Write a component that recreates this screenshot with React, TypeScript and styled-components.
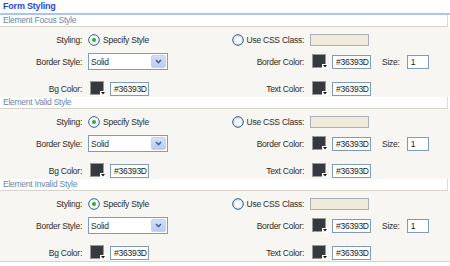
import React from 'react';
import styled, { createGlobalStyle } from 'styled-components';

const GlobalStyle = createGlobalStyle`
    html, body {
        margin: 0;
        padding: 0;
        background: #ffffff;
    }
    body {
        font-family: "Liberation Sans", Arial, sans-serif;
        font-size: 8.5px;
        letter-spacing: -0.25px;
        color: #2b2b2b;
    }
`;

const Page = styled.div`
    width: 450px;
    height: 266px;
    overflow: hidden;
    background: #ffffff;
    display: flex;
    flex-direction: column;
`;

const Title = styled.div`
    height: 13px;
    line-height: 13px;
    padding-left: 3px;
    font-size: 9px;
    font-weight: bold;
    letter-spacing: -0.2px;
    color: #2a47d6;
    border-bottom: 2px solid #a9c6ef;
`;

const SectionHeader = styled.div`
    height: 11px;
    line-height: 11px;
    padding-left: 3px;
    margin-right: 2px;
    color: #6a86ab;
    background: #ffffff;
    border-bottom: 1px solid #d8d4cc;
    border-right: 1px solid #dedad3;
`;

const SectionBody = styled.div`
    height: 70px;
    background: #f7f6f2;
`;

const Footer = styled.div`
    flex: 1;
    background: #ffffff;
    border-top: 1px solid #d8d4cc;
`;

const Row = styled.div<{ $height: number; $top?: number }>`
    display: grid;
    grid-template-columns: 82px 142px 68px 1fr;
    column-gap: 6px;
    align-items: center;
    box-sizing: border-box;
    height: ${p => p.$height}px;
    padding-top: ${p => p.$top || 0}px;
`;

const Label = styled.div`
    text-align: right;
    white-space: nowrap;
`;

const Control = styled.div`
    display: flex;
    align-items: center;
    white-space: nowrap;
`;

const RadioOption = styled.div<{ $end?: boolean }>`
    display: flex;
    align-items: center;
    justify-content: ${p => (p.$end ? 'flex-end' : 'flex-start')};
    gap: 3px;
    white-space: nowrap;

    svg {
        flex-shrink: 0;
    }
`;

const SelectBox = styled.div`
    width: 80px;
    height: 17px;
    box-sizing: border-box;
    border: 1px solid #7f9db9;
    background: #ffffff;
    display: flex;
    align-items: center;
    justify-content: space-between;
    padding-left: 2px;
`;

const SelectButton = styled.div`
    width: 15px;
    height: 13px;
    margin-right: 1px;
    border-radius: 2px;
    background: linear-gradient(#d3e0fd, #b7cbf6);
    border: 1px solid #c3d3f7;
    box-sizing: border-box;
    display: flex;
    align-items: center;
    justify-content: center;
`;

const TextBox = styled.div<{ $width: number; $bg?: string; $border?: string; $height?: number }>`
    flex-shrink: 0;
    width: ${p => p.$width}px;
    height: ${p => p.$height || 14}px;
    line-height: ${p => (p.$height || 14) - 2}px;
    box-sizing: border-box;
    padding-left: 3px;
    background: ${p => p.$bg || '#ffffff'};
    border: 1px solid ${p => p.$border || '#7f9db9'};
    color: #222;
`;

const SwatchWrap = styled.div`
    flex-shrink: 0;
    margin-left: 2px;
    margin-right: 4px;
    display: flex;
`;

const SizeLabel = styled.span`
    margin-left: 11px;
    margin-right: 7px;
`;

const Radio = ({ checked }: { checked?: boolean }) => (
    <svg width="12" height="12" viewBox="0 0 12 12">
        <circle cx="6" cy="6" r="5.3" fill={checked ? '#ffffff' : '#e4e7ec'} stroke="#2d5e8e" strokeWidth="1" />
        <circle cx="6.3" cy="6.3" r="3.4" fill={checked ? '#f2f2f0' : '#f7f8fa'} />
        {checked && <circle cx="6" cy="6" r="2" fill="#2fae2f" />}
    </svg>
);

const Chevron = () => (
    <svg width="7" height="5" viewBox="0 0 7 5">
        <path d="M1 1 L3.5 3.6 L6 1" fill="none" stroke="#4b5f87" strokeWidth="1.5" />
    </svg>
);

const Swatch = ({ color }: { color: string }) => (
    <SwatchWrap>
        <svg width="16" height="15" viewBox="0 0 16 15">
            <rect x="0.5" y="0.5" width="13" height="13" fill={color} stroke="#9a9a9a" />
            <rect x="10" y="10" width="6" height="5" fill="#ffffff" />
            <path d="M11 11 L15 11 L13 13.5 Z" fill="#111111" />
        </svg>
    </SwatchWrap>
);

const ColorField = ({ value }: { value: string }) => (
    <Control>
        <Swatch color={value} />
        <TextBox $width={39}>{value}</TextBox>
    </Control>
);

interface StyleSectionProps {
    title: string;
    borderStyle: string;
    borderColor: string;
    bgColor: string;
    textColor: string;
    size: string;
}

const StyleSection = ({ title, borderStyle, borderColor, bgColor, textColor, size }: StyleSectionProps) => (
    <>
        <SectionHeader>{title}</SectionHeader>
        <SectionBody>
            <Row $height={26}>
                <Label>Styling:</Label>
                <RadioOption>
                    <Radio checked />
                    <span>Specify Style</span>
                </RadioOption>
                <RadioOption $end>
                    <Radio />
                    <span>Use CSS Class:</span>
                </RadioOption>
                <Control>
                    <TextBox $width={59} $height={12} $bg="#efebdb" $border="#aab0b8" />
                </Control>
            </Row>

            <Row $height={15}>
                <Label>Border Style:</Label>
                <Control>
                    <SelectBox>
                        <span>{borderStyle}</span>
                        <SelectButton>
                            <Chevron />
                        </SelectButton>
                    </SelectBox>
                </Control>
                <Label>Border Color:</Label>
                <Control>
                    <Swatch color={borderColor} />
                    <TextBox $width={39}>{borderColor}</TextBox>
                    <SizeLabel>Size:</SizeLabel>
                    <TextBox $width={22}>{size}</TextBox>
                </Control>
            </Row>

            <Row $height={29} $top={12}>
                <Label>Bg Color:</Label>
                <ColorField value={bgColor} />
                <Label>Text Color:</Label>
                <ColorField value={textColor} />
            </Row>
        </SectionBody>
    </>
);

const sections = ['Element Focus Style', 'Element Valid Style', 'Element Invalid Style'];

const App = () => (
    <>
        <GlobalStyle />
        <Page>
            <Title>Form Styling</Title>
            {sections.map(title => (
                <StyleSection
                    key={title}
                    title={title}
                    borderStyle="Solid"
                    borderColor="#36393D"
                    bgColor="#36393D"
                    textColor="#36393D"
                    size="1"
                />
            ))}
            <Footer />
        </Page>
    </>
);

export default App;
